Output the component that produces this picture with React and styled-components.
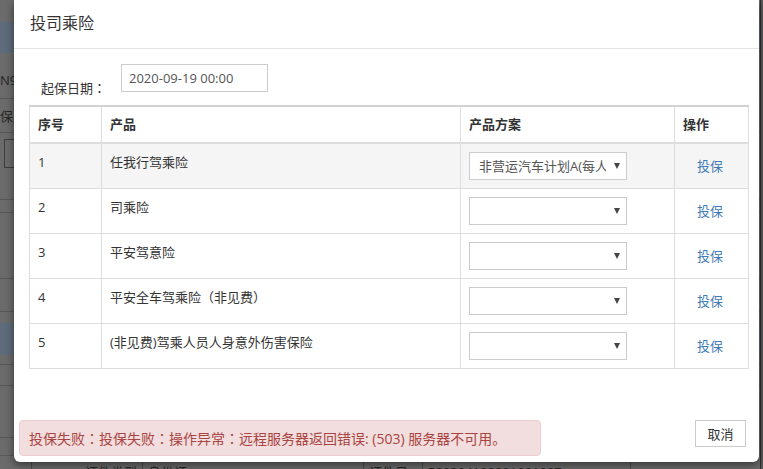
import React from "react";
import styled, { createGlobalStyle } from "styled-components";

const Global = createGlobalStyle`
  html, body { margin: 0; padding: 0; }
  body {
    width: 763px; height: 469px; overflow: hidden;
    font-family: "Open Sans", "Noto Sans CJK SC", sans-serif;
    font-size: 13px; color: #333; background: #6b6b6b;
  }
  * { box-sizing: border-box; }
`;

const Page = styled.div`
  position: relative;
  width: 763px;
  height: 469px;
  overflow: hidden;
  background: #6b6b6b;
`;

const BgBand = styled.div`
  height: ${p => p.h}px;
  background: ${p => p.bg || "#6b6b6b"};
  border-bottom: ${p => (p.line ? "1px solid #585858" : "none")};
  display: flex;
  align-items: center;
  padding-left: ${p => p.pl || 0}px;
  color: #262626;
  font-size: 13px;
  line-height: 20px;
  white-space: nowrap;
`;

const BgBox = styled.div`
  width: 24px;
  height: 29px;
  margin-left: 4px;
  border: 1px solid #3e3e3e;
`;

const BgBottom = styled.div`
  position: absolute;
  left: 0; right: 0; top: 455px; height: 20px;
  display: grid;
  grid-template-columns: 31px 111px 221px 59px 208px 1fr;
  border-top: 1px solid #5a5a5a;
  color: #262626;
  font-size: 13px;
  line-height: 20px;
  padding-top: 6px;
`;

const BgCell = styled.div`
  border-left: ${p => (p.first ? "none" : "1px solid #4c4c4c")};
  text-align: ${p => p.align || "left"};
  padding: 0 5px;
  white-space: nowrap;
  overflow: hidden;
`;

const RightEdge = styled.div`
  position: absolute;
  top: 0; bottom: 0; right: 0; width: 3px;
  background: #5a5a5a;
  border-left: 1px solid #2f2f2f;
`;

const Modal = styled.div`
  position: absolute;
  left: 14px;
  top: 0;
  width: 745px;
  background: #fff;
  border-radius: 0 0 6px 6px;
  box-shadow: 0 3px 9px rgba(0, 0, 0, 0.5);
`;

const Header = styled.div`
  height: 49px;
  border-bottom: 1px solid #e5e5e5;
  padding-left: 16px;
`;

const Title = styled.h4`
  margin: 0;
  font-size: 16px;
  font-weight: normal;
  line-height: 47px;
  color: #333;
`;

const Body = styled.div`
  padding: 15px 11px 15px 15px;
`;

const DateRow = styled.div`
  display: flex;
  align-items: flex-start;
  height: 41px;
  padding-left: 12px;
`;

const Label = styled.label`
  margin-top: 14px;
  line-height: 20px;
  width: 80px;
  color: #333;
`;

const Punct = styled.span`
  font-family: "Noto Sans CJK TC", "Noto Sans CJK SC", sans-serif;
`;

const Input = styled.input`
  width: 147px;
  height: 28px;
  border: 1px solid #ccc;
  padding: 0 7px;
  font: inherit;
  font-size: 13px;
  color: #555;
  outline: none;
`;

const Table = styled.table`
  width: 719px;
  border-collapse: collapse;
  table-layout: fixed;
  border: 1px solid #ddd;
  border-top: 2px solid #d2d2d2;
`;

const Th = styled.th`
  width: ${p => p.w}px;
  text-align: left;
  font-weight: bold;
  padding: 7px 8px 8px;
  line-height: 20px;
  border-left: ${p => (p.first ? "none" : "1px solid #ddd")};
  border-bottom: 2px solid #ddd;
  color: #333;
`;

const Row = styled.tr`
  background: ${p => (p.striped ? "#f5f5f5" : "#fff")};
`;

const Td = styled.td`
  padding: 8px 8px;
  line-height: 20px;
  height: 45px;
  vertical-align: top;
  border-left: 1px solid #ddd;
  border-top: 1px solid #ddd;
  text-align: ${p => (p.center ? "center" : "left")};
  color: #333;
`;

const SelectWrap = styled.div`
  position: relative;
  width: 158px;
  height: 28px;
  &::after {
    content: "";
    position: absolute;
    right: 7px;
    top: 11px;
    border-left: 3px solid transparent;
    border-right: 3px solid transparent;
    border-top: 6px solid #444;
    pointer-events: none;
  }
`;

const Select = styled.select`
  appearance: none;
  -webkit-appearance: none;
  width: 100%;
  height: 28px;
  border: 1px solid #ccc;
  border-radius: 0;
  background: #fff;
  padding: 0 20px 0 9px;
  font: inherit;
  font-size: 13px;
  color: #555;
  outline: none;
`;

const Link = styled.a`
  color: #3f7ab5;
  text-decoration: none;
  display: inline-block;
  margin-top: 4px;
  margin-right: 3px;
`;

const Footer = styled.div`
  display: flex;
  justify-content: space-between;
  align-items: flex-start;
  padding: 36px 13px 6px 5px;
`;

const Alert = styled.div`
  width: 522px;
  height: 36px;
  background: #f2dede;
  border: 1px solid #ebccd1;
  border-radius: 4px;
  color: #a94442;
  font-size: 14px;
  line-height: 20px;
  padding: 7px 9px;
  white-space: nowrap;
`;

const Button = styled.button`
  width: 51px;
  height: 27px;
  background: #fff;
  border: 1px solid #ccc;
  font: inherit;
  font-size: 13px;
  color: #333;
  padding: 0;
`;

const rows = [
  { no: 1, name: <>任我行驾乘险</>, plan: "非营运汽车计划A(每人10万)" },
  { no: 2, name: <>司乘险</>, plan: "" },
  { no: 3, name: <>平安驾意险</>, plan: "" },
  { no: 4, name: <>平安全车驾乘险<Punct>（</Punct>非见费<Punct>）</Punct></>, plan: "" },
  { no: 5, name: <>(非见费)驾乘人员人身意外伤害保险</>, plan: "" },
];

export default function App() {
  return (
    <Page>
      <Global />
      <BgBand h={22} />
      <BgBand h={31} bg="#5d6b7a" />
      <BgBand h={9} />
      <BgBand h={37} line>N9</BgBand>
      <BgBand h={34} line pl={-4}>保则</BgBand>
      <BgBand h={40}><BgBox /></BgBand>
      <BgBand h={27} line />
      <BgBand h={13} line />
      <BgBand h={66} line />
      <BgBand h={33} line />
      <BgBand h={11} />
      <BgBand h={32} bg="#5d6b7a" />
      <BgBand h={10} line />
      <BgBand h={21} line />
      <BgBand h={52} line />
      <BgBottom>
        <BgCell first />
        <BgCell align="right">证件类型</BgCell>
        <BgCell>身份证</BgCell>
        <BgCell>证件号</BgCell>
        <BgCell>520304198201091027</BgCell>
        <BgCell />
      </BgBottom>
      <RightEdge />
      <Modal>
        <Header>
          <Title>投司乘险</Title>
        </Header>
        <Body>
          <DateRow>
            <Label>起保日期<Punct>：</Punct></Label>
            <Input defaultValue="2020-09-19 00:00" />
          </DateRow>
          <Table>
            <thead>
              <tr>
                <Th w={72} first>序号</Th>
                <Th w={359}>产品</Th>
                <Th w={214}>产品方案</Th>
                <Th w={74}>操作</Th>
              </tr>
            </thead>
            <tbody>
              {rows.map((r, i) => (
                <Row key={r.no} striped={i === 0}>
                  <Td>{r.no}</Td>
                  <Td>{r.name}</Td>
                  <Td>
                    <SelectWrap>
                      <Select defaultValue={r.plan}>
                        <option value={r.plan}>{r.plan}</option>
                      </Select>
                    </SelectWrap>
                  </Td>
                  <Td center>
                    <Link href="#">投保</Link>
                  </Td>
                </Row>
              ))}
            </tbody>
          </Table>
        </Body>
        <Footer>
          <Alert>
            投保失败<Punct>：</Punct>投保失败<Punct>：</Punct>操作异常<Punct>：</Punct>远程服务器返回错误: (503) 服务器不可用。
          </Alert>
          <Button>取消</Button>
        </Footer>
      </Modal>
    </Page>
  );
}
